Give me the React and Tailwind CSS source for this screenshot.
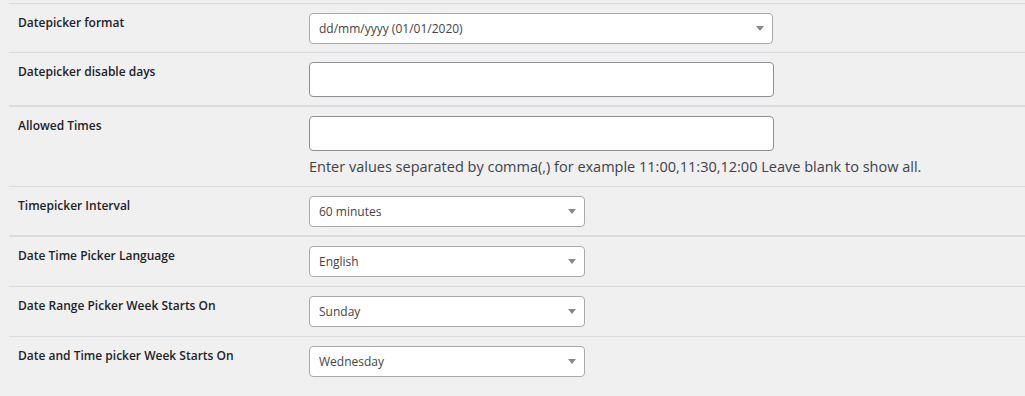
const rows = [
  { label: "Datepicker format", type: "select", value: "dd/mm/yyyy (01/01/2020)", wide: true },
  { label: "Datepicker disable days", type: "input", heavy: true },
  { label: "Allowed Times", type: "input", help: "Enter values separated by comma(,) for example 11:00,11:30,12:00 Leave blank to show all." },
  { label: "Timepicker Interval", type: "select", value: "60 minutes", heavy: true },
  { label: "Date Time Picker Language", type: "select", value: "English", tall: true },
  { label: "Date Range Picker Week Starts On", type: "select", value: "Sunday", tall: true },
  { label: "Date and Time picker Week Starts On", type: "select", value: "Wednesday", last: true },
];

function Select({ value, wide }) {
  return (
    <div
      className={`${wide ? "w-[464px]" : "w-[276px]"} h-[31px] bg-white border border-[#aaaaaa] rounded-[4px] flex items-center justify-between pl-[9px] pr-[8px]`}
    >
      <span className="text-[12px] text-[#444444]">{value}</span>
      <span className="w-0 h-0 border-t-[5px] border-t-[#888888] border-x-[4px] border-x-transparent" />
    </div>
  );
}

function Input() {
  return <div className="w-[465px] h-[35px] bg-white border border-[#8c8f94] rounded-[4px]" />;
}

export default function App() {
  return (
    <div className="w-[1025px] h-[396px] overflow-hidden bg-[#f0f0f1] pt-[3px] pl-[9px] font-['Open_Sans',sans-serif]">
      {rows.map((row, i) => (
        <div
          key={row.label}
          className={`flex pt-[9px] ${row.tall ? "pb-[9px]" : "pb-[8px]"} ${i === 0 ? "border-t border-t-[#dcdcde]" : ""} ${row.last ? "" : row.heavy ? "border-b-2 border-b-[#dcdcde]" : "border-b border-b-[#dcdcde]"}`}
        >
          <div className="w-[300px] pl-[9px] pt-[2px] text-[12px] leading-[16px] font-semibold text-[#1d2327]">
            {row.label}
          </div>
          <div className="flex flex-col">
            {row.type === "select" ? <Select value={row.value} wide={row.wide} /> : <Input />}
            {row.help && (
              <p className="mt-[6px] mb-[1px] text-[14.5px] leading-[20px] text-[#3c434a]">{row.help}</p>
            )}
          </div>
        </div>
      ))}
    </div>
  );
}
